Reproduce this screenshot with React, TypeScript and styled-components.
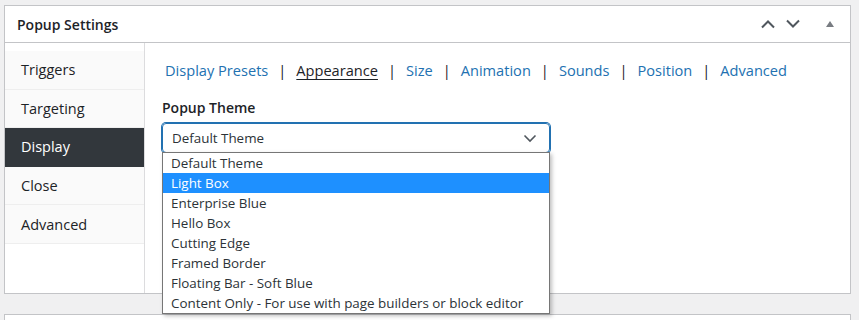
import styled, { createGlobalStyle } from 'styled-components';

const GlobalStyle = createGlobalStyle`
  html, body {
    margin: 0;
    padding: 0;
    background: #f0f0f1;
    font-family: 'Open Sans', 'Noto Sans', sans-serif;
    color: #1d2327;
  }
`;

const sideTabs = ['Triggers', 'Targeting', 'Display', 'Close', 'Advanced'];
const subTabs = ['Display Presets', 'Appearance', 'Size', 'Animation', 'Sounds', 'Position', 'Advanced'];
const themes = [
  'Default Theme',
  'Light Box',
  'Enterprise Blue',
  'Hello Box',
  'Cutting Edge',
  'Framed Border',
  'Floating Bar - Soft Blue',
  'Content Only - For use with page builders or block editor'
];

function App() {
  return (
    <>
      <GlobalStyle />
      <Page>
        <Panel>
          <Header>
            <Title>Popup Settings</Title>
            <HeaderActions>
              <IconButton>
                <svg width="16" height="10" viewBox="0 0 16 10">
                  <path d="M2 8.5 L8 2.5 L14 8.5" fill="none" stroke="#50575e" strokeWidth="2" />
                </svg>
              </IconButton>
              <IconButton>
                <svg width="16" height="10" viewBox="0 0 16 10">
                  <path d="M2 1.5 L8 7.5 L14 1.5" fill="none" stroke="#50575e" strokeWidth="2" />
                </svg>
              </IconButton>
              <IconButton>
                <svg width="10" height="8" viewBox="0 0 10 8">
                  <path d="M1 7 L5 1 L9 7 Z" fill="#787c82" />
                </svg>
              </IconButton>
            </HeaderActions>
          </Header>
          <Body>
            <Sidebar>
              {sideTabs.map((t) => (
                <SideTab key={t} $active={t === 'Display'}>
                  {t}
                </SideTab>
              ))}
            </Sidebar>
            <Content>
              <SubTabs>
                {subTabs.map((t, i) => (
                  <SubTabItem key={t}>
                    {i > 0 && <Pipe>|</Pipe>}
                    <SubTabLink $active={t === 'Appearance'}>{t}</SubTabLink>
                  </SubTabItem>
                ))}
              </SubTabs>
              <Field>
                <Label>Popup Theme</Label>
                <SelectWrap>
                  <Select>
                    <span>Default Theme</span>
                    <svg width="14" height="9" viewBox="0 0 14 9">
                      <path d="M1.5 1.5 L7 7 L12.5 1.5" fill="none" stroke="#50575e" strokeWidth="1.6" />
                    </svg>
                  </Select>
                  <Options>
                    {themes.map((t) => (
                      <Option key={t} $selected={t === 'Light Box'}>
                        {t}
                      </Option>
                    ))}
                  </Options>
                </SelectWrap>
              </Field>
            </Content>
          </Body>
        </Panel>
        <NextPanel />
      </Page>
    </>
  );
}

export default App;

const Page = styled.div`
  padding: 5px 8px 0 4px;
  height: 320px;
  box-sizing: border-box;
  overflow: hidden;
`;

const Panel = styled.div`
  background: #fff;
  border: 1px solid #c3c4c7;
  height: 289px;
  box-sizing: border-box;
  display: flex;
  flex-direction: column;
`;

const NextPanel = styled.div`
  margin-top: 20px;
  background: #fff;
  border: 1px solid #c3c4c7;
  height: 40px;
`;

const Header = styled.div`
  height: 37px;
  flex-shrink: 0;
  border-bottom: 1px solid #c3c4c7;
  display: flex;
  align-items: center;
  justify-content: space-between;
  padding: 0 12px 0 12px;
  box-sizing: border-box;
`;

const Title = styled.h2`
  margin: 0;
  font-size: 14px;
  font-weight: 600;
  color: #1d2327;
`;

const HeaderActions = styled.div`
  display: flex;
  align-items: center;
  gap: 9px;
`;

const IconButton = styled.span`
  display: flex;
  align-items: center;
  justify-content: center;
  width: 16px;
  height: 16px;
  &:last-child {
    margin-left: 12px;
  }
`;

const Body = styled.div`
  flex: 1;
  display: flex;
`;

const Sidebar = styled.div`
  width: 140px;
  flex-shrink: 0;
  border-right: 1px solid #dcdcde;
  padding-top: 8px;
  box-sizing: border-box;
`;

const SideTab = styled.div<{ $active?: boolean }>`
  height: 38.6px;
  box-sizing: border-box;
  display: flex;
  align-items: center;
  padding-left: 16px;
  font-size: 14.5px;
  background: ${(p) => (p.$active ? '#32373c' : '#fafafa')};
  color: ${(p) => (p.$active ? '#fff' : '#1d2327')};
  border-bottom: 1px solid ${(p) => (p.$active ? '#32373c' : '#eeeeee')};
`;

const Content = styled.div`
  flex: 1;
  padding: 15px 0 0 17px;
`;

const SubTabs = styled.div`
  display: flex;
  align-items: center;
  height: 24px;
  padding-left: 3px;
`;

const SubTabItem = styled.span`
  display: flex;
  align-items: center;
`;

const Pipe = styled.span`
  font-size: 14.6px;
  color: #1d2327;
  margin: 0 10px;
`;

const SubTabLink = styled.span<{ $active?: boolean }>`
  font-size: 14.6px;
  color: ${(p) => (p.$active ? '#1d2327' : '#2271b1')};
  text-decoration: ${(p) => (p.$active ? 'underline' : 'none')};
  text-underline-offset: 3px;
`;

const Field = styled.div`
  margin-top: 16px;
`;

const Label = styled.div`
  font-size: 14px;
  font-weight: 600;
  color: #1d2327;
  margin-bottom: 6px;
`;

const SelectWrap = styled.div`
  position: relative;
  width: 388px;
`;

const Select = styled.div`
  height: 30px;
  box-sizing: border-box;
  border: 1px solid #2271b1;
  box-shadow: 0 0 0 1px #2271b1;
  border-radius: 4px;
  display: flex;
  align-items: center;
  justify-content: space-between;
  padding: 0 12px 0 9px;
  font-size: 13.4px;
  color: #2c3338;
`;

const Options = styled.div`
  position: absolute;
  top: 29px;
  left: 0;
  width: 100%;
  box-sizing: border-box;
  background: #fff;
  border: 1px solid #767676;
  box-shadow: 2px 2px 4px rgba(0, 0, 0, 0.25);
  z-index: 2;
`;

const Option = styled.div<{ $selected?: boolean }>`
  height: 20px;
  line-height: 20px;
  padding-left: 8px;
  font-size: 13.4px;
  white-space: nowrap;
  background: ${(p) => (p.$selected ? '#1e90ff' : '#fff')};
  color: ${(p) => (p.$selected ? '#fff' : '#2c3338')};
`;
